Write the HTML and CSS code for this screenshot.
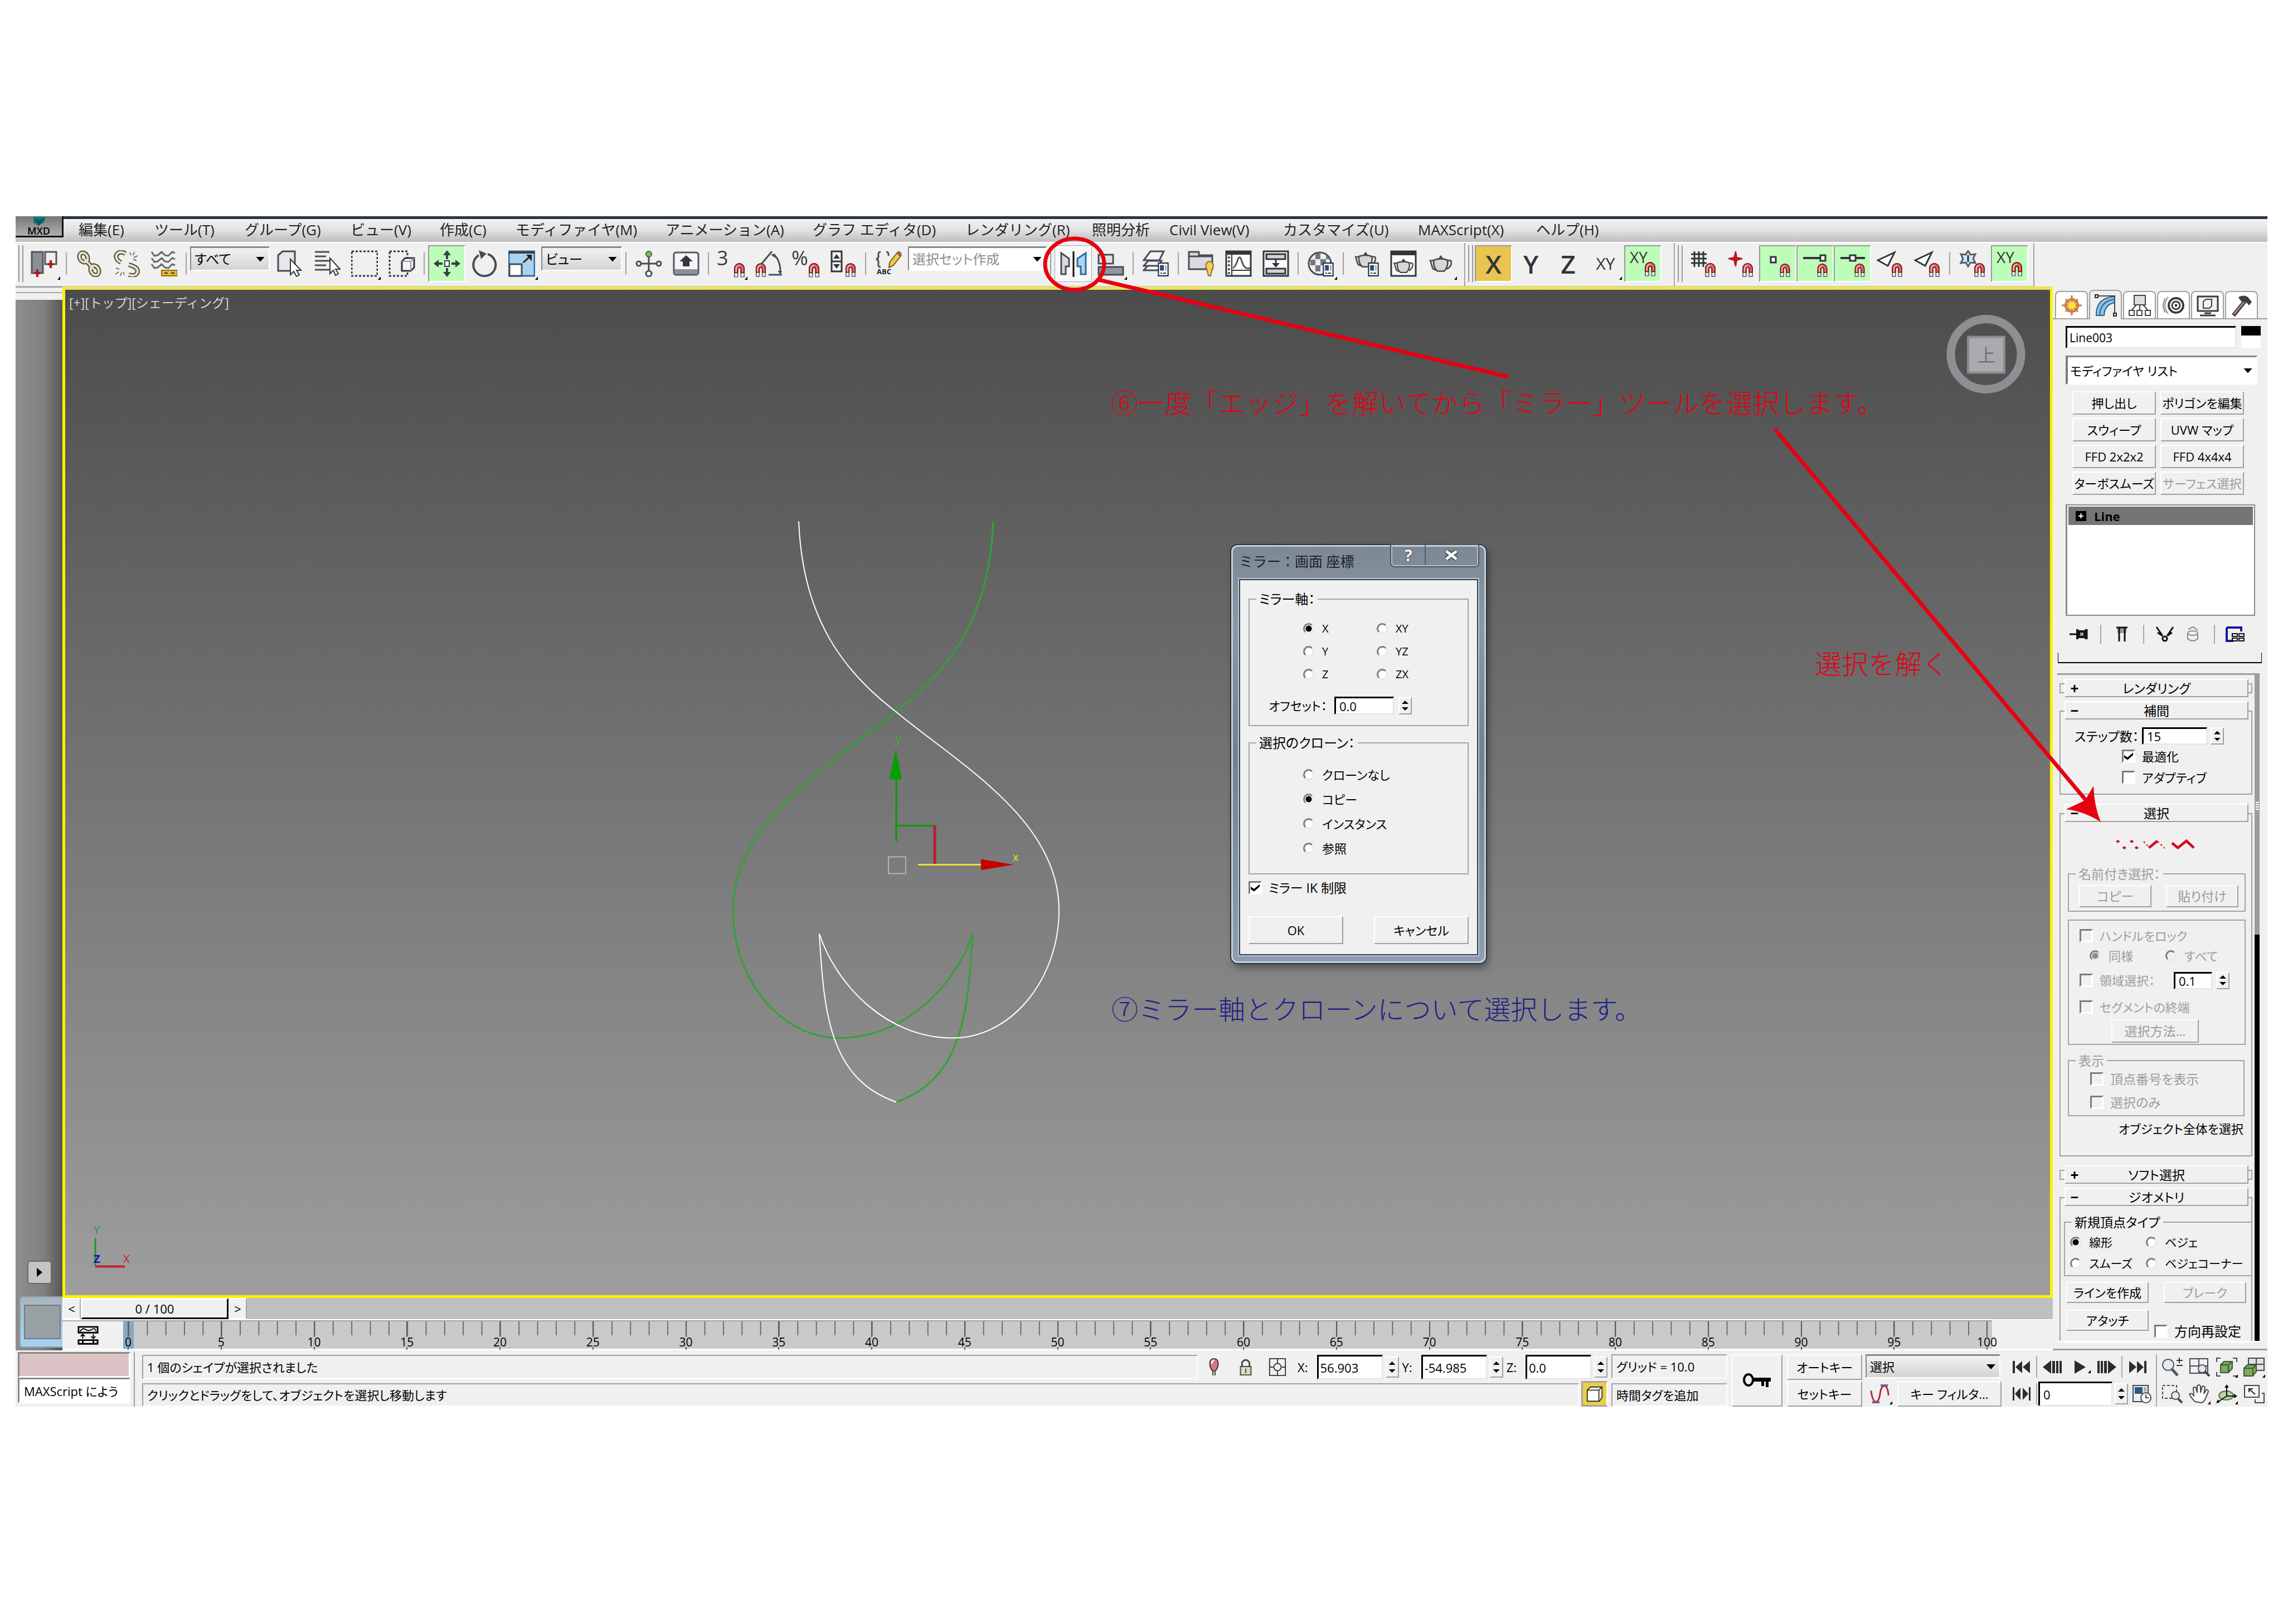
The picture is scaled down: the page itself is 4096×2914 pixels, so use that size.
FILE: index.html
```html
<!DOCTYPE html>
<html lang="ja">
<head>
<meta charset="utf-8">
<title>MXD</title>
<link rel="stylesheet" href="styles.css">
</head>
<body>
<svg class="defs" aria-hidden="true">
  <symbol id="magnet" viewBox="0 0 22 28">
    <path d="M2 27V11a9 9 0 0 1 18 0v16h-6V12a3 3 0 0 0-6 0v15z" fill="#fff" stroke="#6b6b70" stroke-width="2"/>
    <path d="M2 19V11a9 9 0 0 1 18 0v8h-6v-7a3 3 0 0 0-6 0v7z" fill="#e0696b" stroke="#7a1a20" stroke-width="2"/>
    <path d="M5 18v-7q1-5 6-5" fill="none" stroke="#ffb9b5" stroke-width="2"/>
  </symbol>
  <symbol id="teapot" viewBox="0 0 48 40">
    <path d="M10 14H3l5 16 6 3M37 15q8-4 8 3 0 8-9 13" fill="none" stroke="#4a4a50" stroke-width="3"/>
    <path d="M10 13q14-5 27 0 3 12-6 22H17Q8 26 10 13z" fill="#d6d6d8" stroke="#4a4a50" stroke-width="3"/>
    <path d="M19 10l5-7 5 7z" fill="#4a4a50"/>
  </symbol>
  <symbol id="dlg" viewBox="0 0 22 28">
    <path d="M2 2h18v24H2z" fill="#f4f6f8" stroke="#20242c" stroke-width="2"/>
    <path d="M5 6h7v10H5z" fill="#274a72"/><path d="M14 6h3v10h-3z" fill="#9fb6cc"/><path d="M6 21h3M11 21h5" stroke="#20242c" stroke-width="2"/>
  </symbol>
</svg>

<div class="app">
  <header class="menubar">
    <button class="logo" aria-label="MXD"><svg viewBox="0 0 34 18"><path d="M6 0h24l-2 10-12 8L5 12z" fill="#0f7f80"/><path d="M6 2l10 5 13-6-4 8-9 9z" fill="#055a5e"/></svg><span>MXD</span></button>
    <nav class="menus">
      <a href="#">編集(E)</a><a href="#">ツール(T)</a><a href="#">グループ(G)</a><a href="#">ビュー(V)</a><a href="#">作成(C)</a><a href="#">モディファイヤ(M)</a><a href="#">アニメーション(A)</a><a href="#">グラフ エディタ(D)</a><a href="#">レンダリング(R)</a><a href="#">照明分析</a><a href="#">Civil View(V)</a><a href="#">カスタマイズ(U)</a><a href="#">MAXScript(X)</a><a href="#">ヘルプ(H)</a>
    </nav>
  </header>

  <div class="toolbars">
    <div class="toolbar">
      <i class="grip"></i>
      <button class="tool fly" aria-label="toggle"><svg viewBox="0 0 48 48"><path d="M2 3h20v38H2z" fill="#8d8f96" stroke="#55575e" stroke-width="3"/><path d="M26 3h20v22H26z" fill="#eceef2" stroke="#55575e" stroke-width="3"/><path d="M12 34v14M7 41h10M36 18v14M31 25h10" stroke="#b0121f" stroke-width="4"/></svg></button>
      <i class="sep"></i>
      <button class="tool" aria-label="link"><svg viewBox="0 0 48 48" fill="none"><g stroke="#4c4a3a" stroke-width="8"><ellipse cx="14" cy="13" rx="7" ry="9" transform="rotate(-30 14 13)"/><ellipse cx="34" cy="36" rx="7" ry="9" transform="rotate(-30 34 36)"/><path d="M15 15l18 20"/></g><g stroke="#e9e2c4" stroke-width="4"><ellipse cx="14" cy="13" rx="7" ry="9" transform="rotate(-30 14 13)"/><ellipse cx="34" cy="36" rx="7" ry="9" transform="rotate(-30 34 36)"/><path d="M15 15l18 20"/></g></svg></button>
      <button class="tool" aria-label="unlink"><svg viewBox="0 0 48 48" fill="none"><g stroke="#4c4a3a" stroke-width="8"><path d="M22 6Q12 0 6 8q-3 8 8 14M28 26q16 4 16 12-2 10-16 6"/></g><g stroke="#e9e2c4" stroke-width="4"><path d="M22 6Q12 0 6 8q-3 8 8 14M28 26q16 4 16 12-2 10-16 6"/></g><path d="M30 4l2 5M38 3l-2 6M44 10l-7 3M42 19l-6-3M5 32l6 2M4 43l6-4M13 46l2-6M20 44l-2-5" stroke="#77756a" stroke-width="2"/></svg></button>
      <button class="tool" aria-label="bind"><svg viewBox="0 0 48 48" fill="none"><g stroke="#666a72" stroke-width="3"><path d="M2 3l5 7 6-1 7-6 6 6 6 1 7-7 5 2M2 14l5 7 6-1 7-6 6 6 6 1 7-7 5 2M2 25l5 7 6-1 7-6 6 6 6 1 7-7 5 2"/></g><path d="M20 36h28v10H20z" fill="#e7b93c" stroke="#91701c" stroke-width="2"/><path d="M25 41h6M37 41h6" stroke="#6e5310" stroke-width="3"/></svg></button>
      <i class="sep"></i>
      <span class="drop drop-a"><select aria-label="filter"><option>すべて</option></select></span>
      <button class="tool" aria-label="select"><svg viewBox="0 0 48 48"><path d="M3 9l8-7h22v26l-6 9H3z" fill="#e6e7ea" stroke="#4a4c54" stroke-width="3"/><path d="M25 16v28l6-6 5 9 5-3-5-8h8z" fill="#fff" stroke="#33353b" stroke-width="2"/></svg></button>
      <button class="tool" aria-label="by name"><svg viewBox="0 0 48 48"><path d="M2 3h26M2 11h20M2 19h26M2 27h20M2 35h26" stroke="#4a4c54" stroke-width="3"/><path d="M29 14v28l6-6 4 9 5-3-5-8h8z" fill="#fff" stroke="#33353b" stroke-width="2"/></svg></button>
      <button class="tool fly" aria-label="region"><svg viewBox="0 0 48 48"><path d="M1 2h46v44H1z" fill="none" stroke="#33353b" stroke-width="3" stroke-dasharray="4 3"/></svg></button>
      <button class="tool" aria-label="crossing"><svg viewBox="0 0 48 48"><path d="M2 2h32v44H2z" fill="none" stroke="#33353b" stroke-width="3" stroke-dasharray="4 3"/><path d="M24 20l6-6h16v17l-6 6H24z" fill="#f4f4f6" stroke="#33353b" stroke-width="3"/><path d="M24 20h16v17M40 20l6-6" fill="none" stroke="#9a9ca2" stroke-width="2"/></svg></button>
      <i class="sep"></i>
      <button class="tool on" aria-label="move"><svg viewBox="0 0 48 48"><path d="M24 0l7 9H17zM24 48l7-9H17zM0 24l9-7v14zM48 24l-9-7v14z" fill="#3a3f48"/><path d="M24 8v8M24 32v8M8 24h8M32 24h8" stroke="#3a3f48" stroke-width="4"/><path d="M20 19h8v10h-8z" fill="#fff" stroke="#3a3f48" stroke-width="2"/></svg></button>
      <button class="tool" aria-label="rotate"><svg viewBox="0 0 48 48"><path d="M30 7a20 20 0 1 1-16 2" fill="none" stroke="#4a4c54" stroke-width="4"/><path d="M14 0l14 6-10 10z" fill="#4a4c54"/></svg></button>
      <button class="tool fly" aria-label="scale"><svg viewBox="0 0 48 48"><path d="M1 2h46v44H1z" fill="#a9d3ee" stroke="#2f6d9c" stroke-width="3"/><path d="M1 2h46v4H1z" fill="#3b3f47"/><path d="M2 25h22v21H2z" fill="#fff" stroke="#4a4c54" stroke-width="3"/><path d="M27 22L40 10" stroke="#222" stroke-width="3"/><path d="M32 8h10v12z" fill="#222"/></svg></button>
      <span class="drop drop-b"><select aria-label="coordinates"><option>ビュー</option></select></span>
      <i class="sep"></i>
      <button class="tool" aria-label="pivot"><svg viewBox="0 0 48 48"><path d="M24 10v28M8 24h32" stroke="#4a4c54" stroke-width="3"/><circle cx="24" cy="7" r="5" fill="#7fb95e" stroke="#3b6b2a" stroke-width="2"/><g fill="#fff" stroke="#4a4c54" stroke-width="3"><circle cx="6" cy="24" r="4"/><circle cx="42" cy="24" r="4"/><circle cx="24" cy="42" r="5"/></g></svg></button>
      <button class="tool" aria-label="manipulate"><svg viewBox="0 0 48 48"><rect x="2" y="4" width="44" height="40" rx="4" fill="#f6f6f8" stroke="#55575e" stroke-width="3"/><path d="M3 34h42v9H3z" fill="#8b8f98"/><path d="M24 9l12 11h-6v9H18v-9h-6z" fill="#33363c"/></svg></button>
      <i class="sep"></i>
      <button class="tool fly snap" aria-label="snap 3"><span class="num">3</span><svg viewBox="0 0 22 28"><use href="#magnet"/></svg></button>
      <button class="tool" aria-label="angle snap"><svg viewBox="0 0 48 48"><path d="M10 26L30 2M24 44h24M34 8q12 12 11 34" fill="none" stroke="#4a4c54" stroke-width="3"/><path d="M28 8l7-2 1 8zM40 37h8l-3 6z" fill="#4a4c54"/><use href="#magnet" x="0" y="22" width="20" height="26"/></svg></button>
      <button class="tool snap" aria-label="percent snap"><span class="num">%</span><svg viewBox="0 0 22 28"><use href="#magnet"/></svg></button>
      <button class="tool" aria-label="spinner snap"><svg viewBox="0 0 48 48"><path d="M3 2h18v36H3z" fill="#f3f3f5" stroke="#33353b" stroke-width="3"/><path d="M3 20h18" stroke="#33353b" stroke-width="3"/><path d="M6 15l6-8 6 8zM6 25l6 8 6-8z" fill="#33353b"/><use href="#magnet" x="27" y="22" width="20" height="26"/></svg></button>
      <i class="sep"></i>
      <button class="tool" aria-label="edit named sets"><svg viewBox="0 0 48 48"><path d="M10 3Q5 3 6 9t-4 7q5 1 4 8t4 6M20 3q5 0 4 7" fill="none" stroke="#4a4c54" stroke-width="3"/><path d="M26 22L40 4l7 5-14 18-8 4z" fill="#f2cf3e" stroke="#6b5b20" stroke-width="2"/><path d="M38 6l4-5 6 4-4 6z" fill="#a9604a"/><text x="3" y="43" font-size="13" font-weight="700" fill="#222">ABC</text></svg></button>
      <span class="drop drop-c"><select aria-label="named sets"><option>選択セット作成</option></select></span>
      <i class="sep"></i>
      <button class="tool framed" aria-label="mirror"><svg viewBox="0 0 48 48"><path d="M24 2v46" stroke="#111" stroke-width="3"/><path d="M2 5l14 10v14h-6v14H2z" fill="#d7dade" stroke="#4a4c54" stroke-width="3"/><path d="M46 5L31 15v14h6v14h9z" fill="#a9d6f2" stroke="#2f6d9c" stroke-width="3"/></svg></button>
      <button class="tool fly" aria-label="align"><svg viewBox="0 0 48 48"><path d="M2 8h26v16H2z" fill="#e3e4e7" stroke="#4a4c54" stroke-width="3"/><path d="M2 30h44v14H2z" fill="#9296a0" stroke="#4a4c54" stroke-width="3"/></svg></button>
      <i class="sep"></i>
      <button class="tool" aria-label="layers"><svg viewBox="0 0 48 48"><g fill="#f5f5f7" stroke="#4a4c54" stroke-width="3"><path d="M2 36l8-9h24l-6 9z"/><path d="M2 28l8-9h24l-6 9z"/><path d="M2 18L14 2h24l-8 16z"/></g><use href="#dlg" x="26" y="21" width="22" height="27"/></svg></button>
      <i class="sep"></i>
      <button class="tool" aria-label="ribbon"><svg viewBox="0 0 48 48"><path d="M2 3h18v6h24v25H2z" fill="#d9dadd" stroke="#4a4c54" stroke-width="3"/><path d="M2 11h42" stroke="#4a4c54" stroke-width="3"/><path d="M39 20a8 8 0 0 1 5 13l-3 13h-4l-3-13a8 8 0 0 1 5-13z" fill="#f5cf5c" stroke="#8d7330" stroke-width="2"/></svg></button>
      <button class="tool" aria-label="curve editor"><svg viewBox="0 0 48 48"><path d="M2 2h44v44H2z" fill="#fff" stroke="#33353b" stroke-width="3"/><path d="M2 2h44v6H2z" fill="#33353b"/><path d="M12 8v38M12 36h34" stroke="#33353b" stroke-width="2"/><path d="M14 32q6-4 9-16 4-8 7 4 5 16 15 12" fill="none" stroke="#55575e" stroke-width="3"/><path d="M5 13h4M5 20h4M5 27h4M5 34h4M5 41h4" stroke="#33353b" stroke-width="3"/></svg></button>
      <button class="tool" aria-label="schematic"><svg viewBox="0 0 48 48"><path d="M2 2h44v44H2z" fill="#fff" stroke="#33353b" stroke-width="3"/><path d="M7 7h34v9H7zM7 33h34v9H7z" fill="#d2d3d7" stroke="#33353b" stroke-width="3"/><path d="M24 16v10" stroke="#33353b" stroke-width="3"/><path d="M17 23h14l-7 8z" fill="#33353b"/></svg></button>
      <i class="sep"></i>
      <button class="tool fly" aria-label="material"><svg viewBox="0 0 48 48"><circle cx="22" cy="24" r="20" fill="#eceef0" stroke="#4a4c54" stroke-width="3"/><path d="M14 6h9v10h-9zM5 17h9v10H5zM23 16h10v11H23zM14 27h9v11h-9zM33 8l8 8h-8z" fill="#74787f"/><use href="#dlg" x="26" y="21" width="22" height="27"/></svg></button>
      <i class="sep"></i>
      <button class="tool" aria-label="render setup"><svg viewBox="0 0 48 48"><use href="#teapot" x="0" y="0" width="46" height="34"/><use href="#dlg" x="26" y="21" width="22" height="27"/></svg></button>
      <button class="tool" aria-label="frame"><svg viewBox="0 0 48 48"><path d="M2 2h44v44H2z" fill="#fff" stroke="#33353b" stroke-width="3"/><path d="M2 2h44v7H2z" fill="#33353b"/><use href="#teapot" x="5" y="12" width="38" height="32"/></svg></button>
      <button class="tool fly" aria-label="render"><svg viewBox="0 0 48 48"><use href="#teapot" x="1" y="6" width="46" height="36"/></svg></button>
    </div>
    <div class="toolbar axes">
      <i class="grip"></i>
      <button class="tool axis gold">X</button><button class="tool axis">Y</button><button class="tool axis">Z</button><button class="tool axis small fly">XY</button>
      <button class="tool snap on" aria-label="XY snap"><span class="xy">XY</span><svg viewBox="0 0 22 28"><use href="#magnet"/></svg></button>
    </div>
    <div class="toolbar snaps">
      <i class="grip"></i>
      <button class="tool" aria-label="grid snap"><svg viewBox="0 0 48 48"><path d="M8 2v28M16 2v28M24 2v28M2 7h28M2 15h28M2 23h28" stroke="#33353b" stroke-width="3"/><use href="#magnet" x="26" y="22" width="21" height="26"/></svg></button>
      <button class="tool" aria-label="pivot snap"><svg viewBox="0 0 48 48"><path d="M15 2l2 11 10 2-10 3-2 11-3-11-10-3 10-2z" fill="#c01523" stroke="#c01523" stroke-width="2"/><use href="#magnet" x="26" y="22" width="21" height="26"/></svg></button>
      <button class="tool on" aria-label="vertex snap"><svg viewBox="0 0 48 48"><path d="M11 12h9v10h-9z" fill="#fff" stroke="#33353b" stroke-width="3"/><use href="#magnet" x="26" y="23" width="21" height="25"/></svg></button>
      <button class="tool on" aria-label="endpoint snap"><svg viewBox="0 0 48 48"><path d="M2 14h34" stroke="#33353b" stroke-width="4"/><path d="M33 9h9v10h-9z" fill="#fff" stroke="#33353b" stroke-width="3"/><use href="#magnet" x="26" y="23" width="21" height="25"/></svg></button>
      <button class="tool on" aria-label="midpoint snap"><svg viewBox="0 0 48 48"><path d="M2 14h44" stroke="#33353b" stroke-width="4"/><path d="M19 9h10v10H19z" fill="#fff" stroke="#33353b" stroke-width="3"/><use href="#magnet" x="26" y="23" width="21" height="25"/></svg></button>
      <button class="tool" aria-label="face snap"><svg viewBox="0 0 48 48"><path d="M2 18L32 4 20 28z" fill="#fff" stroke="#33353b" stroke-width="3"/><use href="#magnet" x="26" y="22" width="21" height="26"/></svg></button>
      <button class="tool" aria-label="face centre snap"><svg viewBox="0 0 48 48"><path d="M2 18L32 4 20 28z" fill="#fff" stroke="#33353b" stroke-width="3"/><use href="#magnet" x="26" y="22" width="21" height="26"/></svg></button>
      <i class="sep"></i>
      <button class="tool" aria-label="frozen snap"><svg viewBox="0 0 48 48"><path d="M16 1l4 7 9-1-4 8 4 8-9-1-4 7-4-7-9 1 4-8-4-8 9 1z" fill="#d6e8f4" stroke="#55606c" stroke-width="3"/><path d="M16 9v12" stroke="#234" stroke-width="3"/><use href="#magnet" x="26" y="22" width="21" height="26"/></svg></button>
      <button class="tool snap on" aria-label="constraint snap"><span class="xy">XY</span><svg viewBox="0 0 22 28"><use href="#magnet"/></svg></button>
    </div>
  </div>

  <main class="workspace">
    <aside class="gutter">
      <div class="gutter-top"></div>
      <button class="play-arrow" aria-label="open"></button>
      <div class="thumb"></div>
    </aside>

    <section class="viewport">
      <svg class="scene" viewBox="112 514 3571 1812" fill="none">
        <path d="M1782 934C1775 1110 1700 1205 1607 1276 1495 1369 1315 1470 1315 1631 1315 1755 1400 1861 1506 1861 1625 1861 1715 1765 1745 1674 1737 1820 1725 1935 1608 1976" stroke="#2ea435" stroke-width="3"/>
        <path d="M1433 934C1440 1110 1515 1205 1608 1276 1720 1369 1900 1470 1900 1631 1900 1755 1815 1861 1709 1861 1590 1861 1500 1765 1470 1674 1478 1820 1490 1935 1608 1976" stroke="#fff" stroke-width="2"/>
        <path d="M1608 1396V1508M1608 1480H1678" stroke="#00a000" stroke-width="3"/>
        <path d="M1607 1342l11 55h-22z" fill="#00a000"/>
        <path d="M1677 1480V1549" stroke="#b81e2e" stroke-width="5"/>
        <path d="M1647 1550H1762" stroke="#e8e030" stroke-width="3"/>
        <path d="M1760 1540L1818 1550 1760 1560z" fill="#c80000"/>
        <path d="M1594 1536h31v30h-31z" stroke="#b4b4b4" stroke-width="2"/>
        <path d="M171 2220V2271" stroke="#1d9a25" stroke-width="3"/>
        <path d="M171 2271H224" stroke="#c4202c" stroke-width="4"/>
        <g font-size="20"><text x="1607" y="1330" fill="#3fae3a">y</text><text x="1817" y="1543" fill="#e8e030">x</text><text x="168" y="2212" fill="#2f9a33">Y</text><text x="168" y="2264" fill="#1010b0" font-weight="700">Z</text><text x="221" y="2264" fill="#c4202c">X</text></g>
        <circle cx="3563" cy="634" r="63" stroke="#8e8f93" stroke-width="15"/>
        <path d="M3531 603h65v64h-65z" fill="#a9aaad" stroke="#8b8c90" stroke-width="4"/>
        <text x="3548" y="647" font-size="32" fill="#707175">上</text>
      </svg>
      <p class="view-label">[+][トップ][シェーディング]</p>

      <form class="dialog">
        <header class="dialog-title"><h2>ミラー：画面 座標</h2><div class="caption"><button type="button">?</button><button type="button" class="close" aria-label="close"><svg viewBox="0 0 28 22"><path d="M5 4l18 14M23 4L5 18" stroke="#454c56" stroke-width="9"/><path d="M5 4l18 14M23 4L5 18" stroke="#fff" stroke-width="5"/></svg></button></div></header>
        <div class="dialog-body">
          <fieldset class="box axis-box"><legend>ミラー軸：</legend>
            <div class="axis-grid">
              <label><input type="radio" name="ax" checked>X</label><label><input type="radio" name="ax">XY</label>
              <label><input type="radio" name="ax">Y</label><label><input type="radio" name="ax">YZ</label>
              <label><input type="radio" name="ax">Z</label><label><input type="radio" name="ax">ZX</label>
            </div>
            <div class="offset"><label for="off">オフセット：</label><input id="off" class="field" type="text" value="0.0"><span class="spin"><button type="button" aria-label="up"></button><button type="button" aria-label="down"></button></span></div>
          </fieldset>
          <fieldset class="box clone-box"><legend>選択のクローン：</legend>
            <label><input type="radio" name="cl">クローンなし</label>
            <label><input type="radio" name="cl" checked>コピー</label>
            <label><input type="radio" name="cl">インスタンス</label>
            <label><input type="radio" name="cl">参照</label>
          </fieldset>
          <label class="ik"><input type="checkbox" checked>ミラー IK 制限</label>
          <div class="actions"><button type="button" class="btn">OK</button><button type="button" class="btn">キャンセル</button></div>
        </div>
      </form>
    </section>

    <section class="timeline">
      <div class="track"><button class="step">&lt;</button><button class="slider">0 / 100</button><button class="step">&gt;</button></div>
      <div class="ruler-row">
        <button class="mini-curve" aria-label="mini curve editor"><svg viewBox="0 0 40 36" fill="none" stroke="#000"><path d="M2 2h36v11H2z" stroke-width="3"/><path d="M5 11q4-8 10-4t12 0 8 3" stroke-width="2"/><path d="M10 24v-7M6 20l4-4 4 4M30 16v7M26 20l4 4 4-4" stroke-width="2"/><path d="M2 27h36v7H2zM10 27v7M30 27v7" stroke-width="3"/></svg></button>
        <div class="ruler"><div class="ticks"><ol><li>0</li><li>5</li><li>10</li><li>15</li><li>20</li><li>25</li><li>30</li><li>35</li><li>40</li><li>45</li><li>50</li><li>55</li><li>60</li><li>65</li><li>70</li><li>75</li><li>80</li><li>85</li><li>90</li><li>95</li><li>100</li></ol></div></div>
      </div>
    </section>

    <aside class="panel">
      <div class="tabs">
        <button aria-label="create"><svg viewBox="0 0 40 40"><circle cx="20" cy="20" r="12" fill="#e8a25a" stroke="#b9683a" stroke-width="2"/><path d="M20 2v36M2 20h36M9 9l22 22M31 9L9 31" stroke="#c77a4a" stroke-width="3"/><circle cx="20" cy="20" r="7" fill="#ffe23c"/></svg></button>
        <button class="cur" aria-label="modify"><svg viewBox="0 0 40 40"><path d="M3 38V33Q5 6 36 4v11Q18 18 17 38z" fill="#8cc4ea" stroke="#2f5f8c" stroke-width="2"/><path d="M9 38Q10 12 36 9" fill="none" stroke="#2f5f8c" stroke-width="2"/><path d="M3 3h33v34" fill="none" stroke="#444" stroke-width="2"/><path d="M1 1h5v5H1zM34 34h5v5h-5z" fill="#fff" stroke="#222" stroke-width="2"/></svg></button>
        <button aria-label="hierarchy"><svg viewBox="0 0 40 40" fill="#fff" stroke="#444" stroke-width="2"><path d="M10 2h20v17H10z" fill="#dcdde0"/><path d="M20 19v10M14 19L5 29M26 19l9 10" fill="none"/><path d="M1 29h9v9H1zM15 29h9v9h-9zM30 29h9v9h-9z"/></svg></button>
        <button aria-label="motion"><svg viewBox="0 0 40 40" fill="none" stroke="#3c3c42"><circle cx="24" cy="20" r="13" stroke-width="4"/><circle cx="24" cy="20" r="7" stroke-width="3"/><circle cx="24" cy="20" r="2" fill="#222"/><path d="M10 5Q-2 20 10 35M5 7q-8 13 0 26" stroke="#8a8a90" stroke-width="2"/></svg></button>
        <button aria-label="display"><svg viewBox="0 0 40 40" fill="none" stroke="#3c3c42" stroke-width="3"><path d="M2 4h36v26H2z" fill="#f2f2f4"/><path d="M12 13l5-4h10v12l-4 4H12z" stroke-width="2"/><path d="M14 34h12M6 38h28"/></svg></button>
        <button aria-label="utilities"><svg viewBox="0 0 40 40"><path d="M5 38L26 12" stroke="#3a2c2c" stroke-width="7"/><path d="M6 36L25 13" stroke="#b78d85" stroke-width="3"/><path d="M14 5q10-5 17 0l7 9-5 6-6-7-5 2-6-6z" fill="#3b3f44"/></svg></button>
      </div>
      <div class="name-row"><input class="field" type="text" value="Line003" aria-label="name"><button class="swatch" aria-label="colour"></button></div>
      <span class="drop modlist"><select aria-label="modifier list"><option>モディファイヤ リスト</option></select></span>
      <div class="mods">
        <button class="btn">押し出し</button><button class="btn">ポリゴンを編集</button>
        <button class="btn">スウィープ</button><button class="btn">UVW マップ</button>
        <button class="btn">FFD 2x2x2</button><button class="btn">FFD 4x4x4</button>
        <button class="btn">ターボスムーズ</button><button class="btn" disabled>サーフェス選択</button>
      </div>
      <ul class="stack"><li><span class="plus">+</span>Line</li></ul>
      <div class="stack-tools">
        <button aria-label="pin"><svg viewBox="0 0 36 30"><path d="M1 15h12" stroke="#111" stroke-width="3"/><path d="M15 6v18M18 10h10v10H18z" stroke="#111" stroke-width="4" fill="#999"/><path d="M31 6v18" stroke="#111" stroke-width="5"/></svg></button><i></i>
        <button aria-label="show end result"><svg viewBox="0 0 36 30"><path d="M10 3h16v10H10z" fill="#999"/><path d="M8 3h20M13 4v24M23 4v24" stroke="#111" stroke-width="3"/></svg></button><i></i>
        <button aria-label="make unique"><svg viewBox="0 0 36 30" fill="none" stroke="#111" stroke-width="3"><path d="M3 2l11 16M33 2L22 18M5 12l9 6M31 12l-9 6"/><circle cx="18" cy="23" r="4"/></svg></button>
        <button aria-label="remove"><svg viewBox="0 0 36 30" fill="none" stroke="#8c8c8c" stroke-width="2"><ellipse cx="18" cy="13" rx="9" ry="4"/><path d="M9 13v10q9 8 18 0V13M10 6l9-4 8 6"/></svg></button><i></i>
        <button aria-label="configure"><svg viewBox="0 0 36 30" fill="none"><path d="M2 3h26v7M2 3v24h12" stroke="#1418a0" stroke-width="4"/><path d="M12 14h9v5h-9zM24 14h9v5h-9zM12 22h9v5h-9zM24 22h9v5h-9z" stroke="#111" stroke-width="2"/></svg></button>
      </div>
      <div class="rollouts">
        <div class="rolls">
          <section class="roll shut"><h3><b>+</b>レンダリング</h3></section>
          <section class="roll"><h3><b>−</b>補間</h3>
            <div class="steps"><label for="st">ステップ数：</label><input id="st" class="field" type="text" value="15"><span class="spin"><button aria-label="up"></button><button aria-label="down"></button></span></div>
            <div class="interp"><label><input type="checkbox" checked>最適化</label><label><input type="checkbox">アダプティブ</label></div>
          </section>
          <section class="roll"><h3><b>−</b>選択</h3>
            <div class="subobj">
              <button aria-label="vertex"><svg viewBox="0 0 46 24" fill="#c41428"><path d="M2 6l4-3 4 3-4 3zM28 6l4-3 4 3-4 3zM14 18l4-3 4 3-4 3zM37 18l4-3 4 3-4 3z"/></svg></button><button aria-label="segment"><svg viewBox="0 0 46 24" fill="none" stroke="#c41428"><path d="M2 6l11 12M28 6l14 13" stroke-width="2" stroke-dasharray="4 4"/><path d="M12 18L28 5" stroke-width="5"/></svg></button><button aria-label="spline"><svg viewBox="0 0 46 24" fill="none" stroke="#d01020"><path d="M3 9l11 9L30 5l14 13" stroke-width="5"/></svg></button>
            </div>
            <fieldset class="box named" disabled><legend>名前付き選択：</legend><div><button class="btn">コピー</button><button class="btn">貼り付け</button></div></fieldset>
            <fieldset class="box handles"><div>
              <label class="off"><input type="checkbox" disabled>ハンドルをロック</label>
              <p class="pair off"><label><input type="radio" name="h" checked disabled>同様</label><label><input type="radio" name="h" disabled>すべて</label></p>
              <p class="area"><label class="off"><input type="checkbox" disabled>領域選択：</label><input class="field" type="text" value="0.1" aria-label="area"><span class="spin"><button aria-label="up"></button><button aria-label="down"></button></span></p>
              <label class="off seg"><input type="checkbox" disabled>セグメントの終端</label>
              <button class="btn" disabled>選択方法...</button></div>
            </fieldset>
            <fieldset class="box show" disabled><legend>表示</legend><label><input type="checkbox">頂点番号を表示</label><label><input type="checkbox">選択のみ</label></fieldset>
            <p class="whole">オブジェクト全体を選択</p>
          </section>
          <section class="roll shut"><h3><b>+</b>ソフト選択</h3></section>
          <section class="roll open-end"><h3><b>−</b>ジオメトリ</h3>
            <fieldset class="box vtype"><legend>新規頂点タイプ</legend>
              <div class="vgrid"><label><input type="radio" name="v" checked>線形</label><label><input type="radio" name="v">ベジェ</label><label><input type="radio" name="v">スムーズ</label><label><input type="radio" name="v">ベジェコーナー</label></div></fieldset>
            <div class="geo"><button class="btn">ラインを作成</button><button class="btn" disabled>ブレーク</button><button class="btn">アタッチ</button><label><input type="checkbox">方向再設定</label></div>
          </section>
        </div>
        <div class="rollbar"><i></i></div>
      </div>
    </aside>
  </main>

  <footer class="status">
    <div class="listener"><input type="text" class="rec" aria-label="macro recorder"><input type="text" class="scr" value="MAXScript によう" aria-label="listener"></div>
    <div class="prompt">
      <div class="line first"><output class="pane">1 個のシェイプが選択されました</output>
        <button class="ico" aria-label="isolate"><svg viewBox="0 0 36 36"><path d="M18 2q8 0 8 10 0 7-5 13h-6q-5-6-5-13 0-10 8-10z" fill="#cf7a86" stroke="#4a2a30" stroke-width="2"/><path d="M14 12q0-6 4-7" stroke="#fff" stroke-width="3" fill="none"/><path d="M16 26v8M20 26v8" stroke="#333" stroke-width="2"/></svg></button>
        <button class="ico" aria-label="lock"><svg viewBox="0 0 36 36"><path d="M11 18V9q7-9 14 0v9" fill="none" stroke="#444" stroke-width="3"/><path d="M8 17h20v16H8z" fill="#ded9b8" stroke="#444" stroke-width="2"/><path d="M18 21v8" stroke="#444" stroke-width="2"/></svg></button>
        <button class="ico" aria-label="absolute mode"><svg viewBox="0 0 36 36" fill="none" stroke="#333" stroke-width="2"><path d="M3 2h30v32H3zM18 2v9M18 25v9M3 18h7M26 18h7"/><circle cx="18" cy="18" r="7"/></svg></button>
        <label class="coord">X:<input class="field" type="text" value="56.903"></label><span class="spin"><button aria-label="up"></button><button aria-label="down"></button></span>
        <label class="coord">Y:<input class="field" type="text" value="-54.985"></label><span class="spin"><button aria-label="up"></button><button aria-label="down"></button></span>
        <label class="coord">Z:<input class="field" type="text" value="0.0"></label><span class="spin"><button aria-label="up"></button><button aria-label="down"></button></span>
      </div>
      <div class="line"><output class="pane low">クリックとドラッグをして、オブジェクトを選択し移動します</output>
        <button class="tag" aria-label="degradation"><svg viewBox="0 0 36 36" fill="none" stroke="#3a3420" stroke-width="2"><path d="M4 11l6-6h22v20l-5 7H4z" fill="#fff"/><path d="M4 11h22v20M26 11l6-6" /></svg></button></div>
    </div>
    <div class="gridinfo"><output class="pane">グリッド = 10.0</output><output class="pane low">時間タグを追加</output></div>
    <button class="btn key" aria-label="set key"><svg viewBox="0 0 52 30"><ellipse cx="10" cy="14" rx="8" ry="10" fill="none" stroke="#000" stroke-width="4"/><path d="M18 10h32v7h-4v10h-5V17h-3v8h-5v-8H18z"/></svg></button>
    <div class="keys"><button class="btn">オートキー</button><button class="btn">セットキー</button></div>
    <div class="filters"><span class="drop"><select aria-label="key set"><option>選択</option></select></span>
      <div class="frow"><button class="curve fly" aria-label="tangent"><svg viewBox="0 0 40 40" fill="none"><path d="M3 14q3 21 9 21T20 20 29 5q6 2 7 18" stroke="#c02030" stroke-width="3"/><path d="M5 36h14M21 4h14" stroke="#6f6494" stroke-width="4"/></svg></button><button class="btn">キー フィルタ...</button></div></div>
    <div class="transport">
      <div class="trow">
        <button class="t" aria-label="first"><svg viewBox="0 0 36 30"><path d="M2 4h4v22H2zM19 4v22L7 15zM33 4v22L20 15z" fill="#2c2c2e"/></svg></button><i></i>
        <button class="t" aria-label="previous"><svg viewBox="0 0 36 30"><path d="M16 3v24L1 15zM18 4h5v22h-5zM25 4h4v22h-4zM31 4h4v22h-4z" fill="#2c2c2e"/></svg></button>
        <button class="t fly" aria-label="play"><svg viewBox="0 0 36 30"><path d="M9 3v24l20-12z" fill="#2c2c2e"/></svg></button>
        <button class="t" aria-label="next"><svg viewBox="0 0 36 30"><path d="M20 3v24l15-12zM13 4h5v22h-5zM7 4h4v22H7zM1 4h4v22H1z" fill="#2c2c2e"/></svg></button><i></i>
        <button class="t" aria-label="last"><svg viewBox="0 0 36 30"><path d="M30 4h4v22h-4zM17 4v22l12-11zM3 4v22l13-11z" fill="#2c2c2e"/></svg></button>
      </div>
      <div class="trow">
        <button class="t" aria-label="key mode"><svg viewBox="0 0 36 30"><path d="M2 3h3v24H2zM31 3h3v24h-3zM16 4v22L6 15zM20 4v22l10-11z" fill="#2c2c2e"/></svg></button><i></i>
        <input class="field frame" type="text" value="0" aria-label="frame"><span class="spin"><button aria-label="up"></button><button aria-label="down"></button></span>
        <button class="t time" aria-label="time config"><svg viewBox="0 0 36 36"><path d="M2 3h27v29H2z" fill="#eceef0" stroke="#44484e" stroke-width="2"/><path d="M5 6h14v12H5z" fill="#2d577e"/><path d="M21 6h5v8h-5z" fill="#9db4c8"/><circle cx="25" cy="25" r="9" fill="#fff" stroke="#44484e" stroke-width="2"/><path d="M25 19v6h5" fill="none" stroke="#44484e" stroke-width="2"/></svg></button>
      </div>
    </div>
    <div class="nav">
      <button aria-label="zoom"><svg viewBox="0 0 40 36" fill="none"><circle cx="13" cy="14" r="10" fill="#e4eaee" stroke="#55595f" stroke-width="2"/><path d="M20 22l10 11" stroke="#55595f" stroke-width="5"/><path d="M28 6h11M33 1v10M28 15h11" stroke="#33353b" stroke-width="2"/></svg></button>
      <button aria-label="zoom all"><svg viewBox="0 0 40 36" fill="none"><path d="M3 3h32v26H3zM19 3v26M3 16h32" stroke="#44484e" stroke-width="2"/><circle cx="25" cy="21" r="7" fill="#e4eaee" stroke="#55595f" stroke-width="2"/><path d="M30 26l8 8" stroke="#44484e" stroke-width="4"/></svg></button>
      <button class="fly" aria-label="extents"><svg viewBox="0 0 40 36"><path d="M2 9V2h7M31 2h7v7M2 27v7h7M31 34h7" fill="none" stroke="#44484e" stroke-width="2"/><path d="M9 14l6-6h15v12l-7 8H9z" fill="#7ea864" stroke="#3b5a2c" stroke-width="2"/><path d="M9 14h14v14M23 14l7-6" fill="none" stroke="#3b5a2c" stroke-width="2"/></svg></button>
      <button class="fly" aria-label="extents all"><svg viewBox="0 0 40 36"><path d="M10 2h28v22H10zM24 2v22M10 13h28" fill="#dfe1e6" stroke="#44484e" stroke-width="2"/><path d="M2 20l6-6h16v12l-6 8H2z" fill="#7ea864" stroke="#3b5a2c" stroke-width="2"/><path d="M2 20h16v14M18 20l6-6" fill="none" stroke="#3b5a2c" stroke-width="2"/></svg></button>
      <button aria-label="region zoom"><svg viewBox="0 0 40 36" fill="none"><path d="M3 3h25v23H3z" stroke="#44484e" stroke-width="2" stroke-dasharray="5 3"/><circle cx="26" cy="21" r="7" fill="#e4eaee" stroke="#55595f" stroke-width="2"/><path d="M31 27l7 7" stroke="#44484e" stroke-width="4"/></svg></button>
      <button class="fly" aria-label="pan"><svg viewBox="0 0 40 36"><path d="M12 32Q6 26 2 19q3-4 8 2L9 7q3-3 5 1l2 8V4q3-4 6 0v12l3-11q4-2 5 2l-2 11 4-7q4-1 4 3l-5 12q-2 6-7 8z" fill="#fff" stroke="#44484e" stroke-width="2"/></svg></button>
      <button class="fly" aria-label="orbit"><svg viewBox="0 0 40 36" fill="none"><ellipse cx="19" cy="21" rx="13" ry="8" fill="#b9d3a6" stroke="#556b48" stroke-width="2"/><path d="M20 22V5M20 22h15M20 22L5 32" stroke="#111" stroke-width="2"/><path d="M20 1l4 6h-8zM39 22l-6-4v8zM1 35l3-7 4 5z" fill="#111"/></svg></button>
      <button aria-label="maximise"><svg viewBox="0 0 40 36" fill="none"><path d="M3 3h26v21H3z" fill="#f2f4f6" stroke="#44484e" stroke-width="2"/><path d="M34 17h4v17H22v-6" stroke="#44484e" stroke-width="2"/><path d="M22 19L12 10M11 15V9h7" stroke="#222" stroke-width="2"/></svg></button>
    </div>
  </footer>

  <div class="notes">
    <svg viewBox="28 388 4040 2134" fill="none" stroke="#e60012" stroke-width="7">
      <ellipse cx="1928" cy="473" rx="53" ry="46"/>
      <path d="M1971 501L2706 675"/>
      <path d="M3184 769L3745 1438"/>
      <path d="M3769 1474Q3740 1455 3707 1451L3741 1435 3756 1409Q3757 1445 3769 1474z" fill="#e60012" stroke="none"/>
    </svg>
    <p class="note n1">⑥一度「エッジ」を解いてから「ミラー」ツールを選択します。</p>
    <p class="note n2">選択を解く</p>
    <p class="note n3">⑦ミラー軸とクローンについて選択します。</p>
  </div>
</div>
</body>
</html>
```
FILE: styles.css
```css
* { box-sizing: border-box; }
body {
  margin: 0;
  padding: 388px 28px 0;
  background: #fff;
  color: #000;
  font: 24px/24px "Open Sans", "Noto Sans CJK JP", sans-serif;
  font-feature-settings: "palt";
}
.defs { position: absolute; width: 0; height: 0; }
p, h2, h3, ul, ol { margin: 0; padding: 0; list-style: none; font-weight: 400; font-size: inherit; }
button, input, select {
  font: inherit; color: inherit; font-feature-settings: inherit;
  margin: 0; padding: 0; border: 0; border-radius: 0; background: none; outline: 0;
  appearance: none;
}
button { display: flex; align-items: center; justify-content: center; white-space: nowrap; position: relative; }
svg { display: block; }
label { white-space: nowrap; }
.app { position: relative; background: #f0f0f0; }

/* menu bar */
.menubar {
  display: flex; height: 46px; border-top: 5px solid #2b3442;
  background: linear-gradient(#f0f2f4, #e4e4e4 45%, #bdbdbd);
}
.logo {
  flex: none; width: 86px; height: 38px; margin-top: -5px; flex-direction: column;
  background: linear-gradient(#777, #b0b0b0); border-right: 3px solid #111; border-bottom: 3px solid #111;
  font-size: 18px; line-height: 18px; font-weight: 600;
}
.logo svg { width: 36px; height: 16px; }
.menus {
  display: grid; padding: 0 0 4px 27px; align-items: center; font-size: 26px; font-feature-settings: normal;
  grid-template-columns: 136px 162px 190px 160px 136px 269px 264px 274px 227px 139px 204px 242px 212px auto;
}
.menus a { color: #222; text-decoration: none; white-space: nowrap; }

/* toolbars */
.toolbars { display: flex; height: 80px; border-top: 2px solid #fff; }
.toolbar { display: flex; align-items: center; padding: 0 9px 3px 0; border-right: 2px solid #a8a0a4; border-bottom: 1px solid #ccc; }
.toolbar.axes { padding-right: 22px; }
.grip { width: 17px; height: 66px; border-left: 2px solid #fff; position: relative; }
.grip::before { content: ""; display: block; margin-left: 3px; width: 5px; height: 66px; border-left: 2px solid #999; border-right: 2px solid #999; }
.tool { flex: none; width: 67px; height: 66px; }
.tool svg { width: 48px; height: 48px; }
.sep { flex: none; width: 2px; height: 40px; margin: 0 6px; background: #a0a0a0; }
.fly::after {
  content: ""; position: absolute; right: 4px; bottom: 4px; width: 5px; height: 6px;
  background: #000; clip-path: polygon(100% 0, 100% 100%, 0 100%);
}
.on, .gold { border: 2px solid #fff; border-top-color: #999; border-left-color: #999; background: #bdfdb9; }
.gold { background: #e8c450; }
.framed { background: #f8f8f8; border: 1px solid #aaa; }
.axis { font-size: 46px; color: #33353b; font-weight: 600; }
.axis.small { font-size: 30px; font-weight: 400; }
.snap { align-items: flex-start; justify-content: flex-start; padding: 10px 0 0 8px; }
.snap svg { position: absolute; right: 8px; bottom: 8px; width: 21px; height: 27px; }
.num { font-size: 36px; line-height: 26px; color: #3a3c44; }
.xy { font-size: 28px; line-height: 22px; color: #33353b; }
.snap.on { padding: 8px 0 0 8px; }
.drop { position: relative; display: block; flex: none; border: 2px solid #fff; border-top: 3px solid #888; border-left-color: #888; background: linear-gradient(#f2f2f2, #d4d4d4); }
.drop select { display: block; width: 100%; height: 100%; padding-left: 6px; }
.drop::after { content: ""; position: absolute; right: 7px; top: 50%; margin-top: -4px; width: 16px; height: 9px; background: #000; clip-path: polygon(0 0, 100% 0, 50% 100%); pointer-events: none; }
.toolbar .drop { height: 44px; margin-bottom: 18px; margin-left: 2px; }
.toolbar .drop-a { width: 143px; margin: 0 2px 18px 0; }
.drop-b { width: 145px; }
.drop-c { width: 249px; background: #fff; color: #8c8c8c; }

/* workspace */
.workspace { display: grid; grid-template-columns: 84px 1fr 385px; grid-template-rows: 1fr auto; }
.gutter {
  grid-row: 1 / 3; display: flex; flex-direction: column;
  background: linear-gradient(90deg, #8e8e8e, #808080 60%, #565656);
}
.gutter-top { height: 24px; background: #f0f0f0; border-top: 2px solid #999; border-bottom: 12px solid #f0f0f0; box-shadow: inset 0 -2px 0 #aaa; }
.play-arrow { width: 44px; height: 42px; margin: auto 0 22px 21px; border: 2px solid #6a6a6a; border-radius: 6px; background: #c4c4c4; }
.play-arrow::before { content: ""; width: 10px; height: 16px; background: #000; clip-path: polygon(0 0, 100% 50%, 0 100%); }
.thumb { height: 92px; margin: 0 0 5px 7px; border: 2px solid #8fa6b4; border-right: 0; border-radius: 6px 0 0 6px; background: linear-gradient(#aab4ba, #a5d0ee 80%); padding: 13px 3px 17px 6px; }
.thumb::before { content: ""; display: block; height: 100%; border: 2px solid #6e7c88; background: #98a0a4; }
.viewport { position: relative; border: 5px solid #fff200; border-top: 6px solid #e9e45c; background: linear-gradient(#4c4c4c, #9e9e9e); }
.scene { position: absolute; left: -5px; top: -6px; width: calc(100% + 10px); height: calc(100% + 11px); }
.view-label { padding: 11px 7px; color: #d4d4d4; font-size: 23px; font-feature-settings: normal; }

/* dialog */
.dialog {
  position: absolute; left: 2092px; top: 458px; width: 457px; padding: 0 14px 14px;
  border-radius: 12px; background: linear-gradient(#7d8894, #8a98a6 20%, #72808f 50%, #8e9eb0);
  box-shadow: 0 0 0 2px #2c333c, inset 0 0 0 3px #c3d0dc, 4px 8px 14px #0006;
}
.dialog-title { display: flex; justify-content: space-between; height: 61px; }
.dialog h2 { line-height: 58px; font-size: 25px; font-feature-settings: normal; white-space: nowrap; color: #1c2030; }
.caption { display: flex; height: 38px; border: 2px solid #b4c0cc; border-top: 0; border-radius: 0 0 6px 6px; box-shadow: 0 0 0 2px #4c5660; }
.caption button { width: 58px; color: #fff; font-weight: 700; font-size: 28px; text-shadow: 0 0 3px #222; }
.caption .close { width: 94px; border-left: 2px solid #56606c; }
.caption svg { width: 28px; height: 22px; }
.dialog-body { padding: 22px 15px 18px; border: 2px solid #33404e; background: #f0f0f0; box-shadow: 0 0 0 2px #b9c7d6; }
.box { min-width: 0; margin: 0; padding: 0; border: 2px solid #a4a4a4; }
.box legend { margin-left: 12px; padding: 0 5px; }
.axis-box { padding: 20px 0 19px; }
.axis-grid { display: grid; grid-template-columns: 132px 1fr; padding-left: 96px; }
.axis-grid label { height: 41px; font-size: 20px; }
label:has(> input) { display: flex; align-items: center; }
input[type=radio] { flex: none; width: 20px; height: 20px; margin-right: 14px; border: 3px solid #7c7c7c; border-right-color: #e8e8e8; border-bottom-color: #e8e8e8; border-radius: 50%; background: #fff; }
input[type=radio]:checked { background: radial-gradient(circle, #000 5px, #fff 6px); }
input[type=checkbox] { flex: none; width: 24px; height: 24px; margin-right: 12px; border: 3px solid #7c7c7c; border-right-color: #fff; border-bottom-color: #fff; background: #fff; display: grid; place-items: center; }
input[type=checkbox]:checked::before { content: ""; width: 16px; height: 13px; background: #000; clip-path: polygon(0 35%, 38% 65%, 100% 0, 100% 35%, 38% 100%, 0 70%); }
input:disabled { background: #f0f0f0; }
input[type=radio]:checked:disabled { background: radial-gradient(circle, #8c8c8c 5px, #f0f0f0 6px); }
.field { border: 3px solid #000; border-right: 2px solid #e4e4e4; border-bottom: 2px solid #e4e4e4; background: #fff; padding-left: 6px; font-size: 22px; min-width: 0; }
.spin { flex: none; width: 24px; height: 31px; display: flex; flex-direction: column; align-items: center; justify-content: center; gap: 6px; border: 2px solid #fff; border-right-color: #a0a0a0; border-bottom-color: #a0a0a0; }
.spin button { width: 12px; height: 6px; background: #000; clip-path: polygon(50% 0, 100% 100%, 0 100%); }
.spin button + button { clip-path: polygon(0 0, 100% 0, 50% 100%); }
.offset { display: flex; align-items: center; height: 32px; margin-top: 20px; padding-left: 34px; }
.offset label { width: 118px; font-size: 22px; }
.offset .field { width: 107px; height: 32px; margin-right: 8px; }
.clone-box { margin-top: 18px; padding: 23px 0 23px; }
.clone-box label { height: 44px; padding-left: 96px; font-size: 22px; }
.ik { height: 24px; margin-top: 12px; font-size: 23px; }
.actions { display: flex; justify-content: space-between; margin-top: 39px; }
.btn { border: 2px solid #fff; border-right-color: #a0a0a0; border-bottom-color: #a0a0a0; background: #f0f0f0; }
.btn:disabled, .off, fieldset:disabled { color: #9c9c9c; }
.actions .btn { width: 170px; height: 50px; font-size: 22px; }

/* time line */
.track { display: flex; height: 38px; background: #bfbfbf; }
.step { width: 33px; background: #f0f0f0; border: 2px solid #fff; border-right-color: #aaa; font-size: 22px; }
.slider { width: 265px; background: #f0f0f0; border: 3px solid #fff; border-right-color: #000; border-bottom-color: #000; font-size: 22px; }
.ruler-row { display: flex; height: 56px; border-top: 2px solid #fff; border-bottom: 3px solid #fff; }
.mini-curve { width: 109px; padding-right: 18px; border-top: 2px solid #aaa; }
.mini-curve svg { width: 38px; height: 36px; }
.ruler { flex: 1; margin-right: 109px; padding: 0 9px; border-top: 2px solid #a0a0a0; background: linear-gradient(90deg, #86a8c2 19px, #c9c9c9 19px); }
.ticks { height: 100%; background: linear-gradient(90deg, #6c6c6c 2px, transparent 2px) 0 0 / 1% 25px repeat-x; }
.ticks ol { display: flex; justify-content: space-between; height: 100%; font-size: 21px; line-height: 18px; }
.ticks li { width: 0; display: flex; flex-direction: column; align-items: center; }
.ticks li::before, .ticks li::after { content: ""; flex: none; width: 2px; height: 28px; background: #5c5c5c; }
.ticks li::after { height: 5px; }

/* command panel */
.panel { grid-column: 3; grid-row: 1 / 3; display: flex; flex-direction: column; padding-top: 8px; border-bottom: 3px solid #a0a0a0; font-size: 23px; }
.tabs { display: flex; gap: 2px; height: 51px; padding-left: 4px; border-bottom: 2px solid #a0a0a0; }
.tabs button { width: 59px; background: #fff; border: 2px solid #a0a0a0; border-bottom: 0; border-radius: 8px 8px 0 0; }
.tabs .cur { background: #f0f0f0; margin: -2px 0; }
.tabs svg { width: 42px; height: 40px; }
.name-row { display: flex; gap: 9px; margin: 12px 12px 0 23px; height: 40px; }
.name-row .field { flex: 1; padding-left: 4px; font-size: 21px; }
.swatch { width: 35px; background: linear-gradient(#000 17px, #fff 17px); }
.modlist { height: 52px; margin: 13px 18px 0 23px; background: #fff; border-left: 4px solid #7c7c7c; }
.modlist select { font-size: 22px; padding-left: 4px; }
.mods { display: grid; grid-template-columns: 1fr 1fr; grid-auto-rows: 42px; gap: 6px 8px; margin: 12px 42px 0 35px; font-size: 22px; }
.stack { height: 200px; margin: 17px 22px 0 23px; padding: 2px; border: 2px solid #8a8a8a; border-left-width: 3px; background: #fff; }
.stack li { display: flex; align-items: center; height: 33px; padding-left: 13px; background: #757575; font-weight: 700; font-size: 22px; }
.plus { width: 19px; height: 18px; margin-right: 14px; background: #000; color: #fff; line-height: 16px; text-align: center; font-size: 18px; }
.stack-tools { display: flex; align-items: center; height: 66px; margin: 0 10px 16px 9px; box-shadow: 0 18px 0 -1px #f0f0f0, 0 19px 0 0 #000; padding-left: 19px; }
.stack-tools button { width: 38px; }
.stack-tools svg { width: 36px; height: 30px; }
.stack-tools i { width: 2px; height: 34px; background: #a8a8a8; margin: 0 18px 0 19px; }
.stack-tools button + button { margin-left: 12px; }
.rollouts { display: flex; margin: 21px 14px 11px 8px; border-top: 3px solid #9c9c9c; border-bottom: 3px solid #fff; height: 1201px; overflow: hidden; }
.rolls { flex: 1; min-width: 0; padding: 15px 4px 0; }
.rollbar { width: 9px; background: linear-gradient(#9c9c9c 39%, #000 39%); padding-top: 228px; }
.rollbar i { display: block; width: 6px; height: 15px; margin: auto; background: repeating-linear-gradient(#fff 0 2px, #9c9c9c 2px 4px); }
.roll { border: 2px solid #a0a0a0; margin-bottom: 33px; padding: 0 10px; }
.roll h3 { position: relative; display: flex; align-items: center; justify-content: center; height: 33px; margin: -19px -5px 0 -3px; background: #f0f0f0; border: 2px solid #fff; border-right-color: #a0a0a0; border-bottom-color: #a0a0a0; }
.roll h3 b { position: absolute; left: 6px; width: 20px; font-size: 26px; text-align: center; }
.shut { height: 18px; margin-bottom: 31px; }
.shut h3 { margin-top: -10px; }
.roll:has(+ .shut) { margin-bottom: 24px; }
.steps { display: flex; align-items: center; height: 31px; margin: 14px 0 0 15px; }
.steps label { width: 121px; }
.steps .field { width: 117px; height: 31px; margin-right: 6px; }
.interp { padding: 2px 0 10px 100px; font-size: 22px; }
.interp label { height: 38px; }
.subobj { display: flex; justify-content: center; gap: 6px; height: 81px; padding-right: 4px; }
.subobj svg { width: 44px; height: 23px; }
.named { margin: 0 0 0 3px; padding: 8px 0 6px; }
.named > div { display: flex; justify-content: space-between; padding: 0 11px 0 18px; }
.named .btn { width: 130px; height: 40px; }
.handles { margin: 14px 0 0 3px; padding: 9px 10px 2px 19px; }
.handles label { height: 36px; font-size: 22px; }
.pair { display: flex; gap: 58px; padding-left: 18px; }
.pair input { margin-right: 14px; }
.area { display: flex; align-items: center; height: 52px; }
.handles .area label { width: 169px; }
.area .field { width: 69px; height: 31px; margin-right: 7px; }
.handles .seg { height: 44px; }
.handles .btn { width: 157px; height: 42px; margin-left: 57px; }
.show { margin: 16px 2px 0 3px; padding: 0 0 2px; }
.show label { height: 42px; padding-left: 38px; }
.whole { padding: 10px 4px 36px 0; text-align: right; font-size: 22px; white-space: nowrap; }
.open-end { border-bottom: 0; margin: 0; }
.vtype { margin: 17px -10px 0 -4px; padding: 5px 0 2px; border-right: 0; }
.vtype input { margin-right: 14px; }
.vgrid { display: grid; grid-template-columns: 136px 1fr; padding-left: 9px; font-size: 21px; }
.vgrid label { height: 38px; }
.geo { display: grid; grid-template-columns: 148px 148px; grid-template-rows: 38px 60px; gap: 12px 27px; margin-top: 10px; font-size: 22px; }
.geo .btn { height: 38px; }
.geo label { align-self: start; height: 24px; margin: 27px 0 0 -17px; font-size: 24px; }

/* status bar */
.status { display: flex; gap: 8px; height: 101px; padding-top: 7px; font-size: 22px; overflow: hidden; }
.listener { flex: none; width: 214px; margin-top: -4px; padding: 0 8px 0 4px; border-right: 2px solid #a0a0a0; }
.listener input { display: block; width: 202px; height: 46px; border: 3px solid #888; border-right-color: #fff; border-bottom-color: #fff; padding-left: 8px; }
.rec { background: #dcc2c4; }
.scr { background: #fff; }
.prompt { flex: 1; min-width: 0; margin-left: 5px; }
.line { display: flex; align-items: center; height: 46px; margin-bottom: 2px; }
.first { padding-right: 5px; }
.pane { display: flex; flex: 1; align-items: center; height: 44px; padding-left: 7px; border: 2px solid #a0a0a0; border-right-color: #fff; border-bottom-color: #fff; white-space: nowrap; }
.low { height: 42px; margin-top: 4px; }
.ico { width: 57px; }
.ico svg { width: 36px; height: 34px; }
.coord { gap: 16px; padding-left: 6px; }
.coord .field { width: 118px; height: 44px; margin-right: 5px; padding-left: 3px; }
.coord:first-of-type { padding-left: 8px; }
.line .spin, .trow .spin { height: 38px; gap: 8px; }
.tag { width: 48px; height: 46px; margin: 0 4px 0 4px; background: #e9d04c; border: 3px solid #b0a0a0; border-right-color: #fff; }
.tag svg { width: 34px; height: 34px; }
.gridinfo { width: 208px; margin-left: -6px; }
.gridinfo .low { margin-top: 8px; }
.key { width: 91px; height: 94px; }
.key svg { width: 52px; height: 30px; }
.keys { width: 135px; }
.keys .btn { width: 100%; height: 46px; margin-bottom: 2px; }
.filters { width: 244px; margin-left: -2px; }
.filters .drop { height: 43px; margin-bottom: 5px; width: 242px; }
.frow { display: flex; justify-content: space-between; }
.frow .btn { width: 187px; height: 46px; }
.curve { width: 52px; }
.curve svg { width: 38px; height: 38px; }
.transport { width: 268px; margin-left: 3px; }
.trow { display: flex; align-items: center; height: 46px; margin-bottom: 2px; }
.trow .t { width: 49px; }
.t svg { width: 36px; height: 30px; }
.t.time svg { height: 36px; }
.trow i { width: 2px; height: 38px; margin: 0 2px; background: #a8a8a8; }
.frame { width: 133px; height: 44px; margin-right: 4px; }
.nav { display: grid; grid-template-columns: repeat(4, 49px); grid-auto-rows: 46px; gap: 2px 0; border-left: 2px solid #a8a8a8; margin-left: -10px; padding-left: 2px; }
.nav svg { width: 40px; height: 36px; }

/* annotations drawn over the window */
.notes { position: absolute; inset: 0; pointer-events: none; font-feature-settings: normal; }
.notes svg { width: 100%; height: 100%; }
.note { position: absolute; font: 300 48px/60px "Noto Sans CJK JP", sans-serif; white-space: nowrap; color: #e60012; }
.n1 { left: 1966px; top: 302px; }
.n2 { left: 3228px; top: 770px; }
.n3 { left: 1966px; top: 1390px; color: #1d2088; }
```
